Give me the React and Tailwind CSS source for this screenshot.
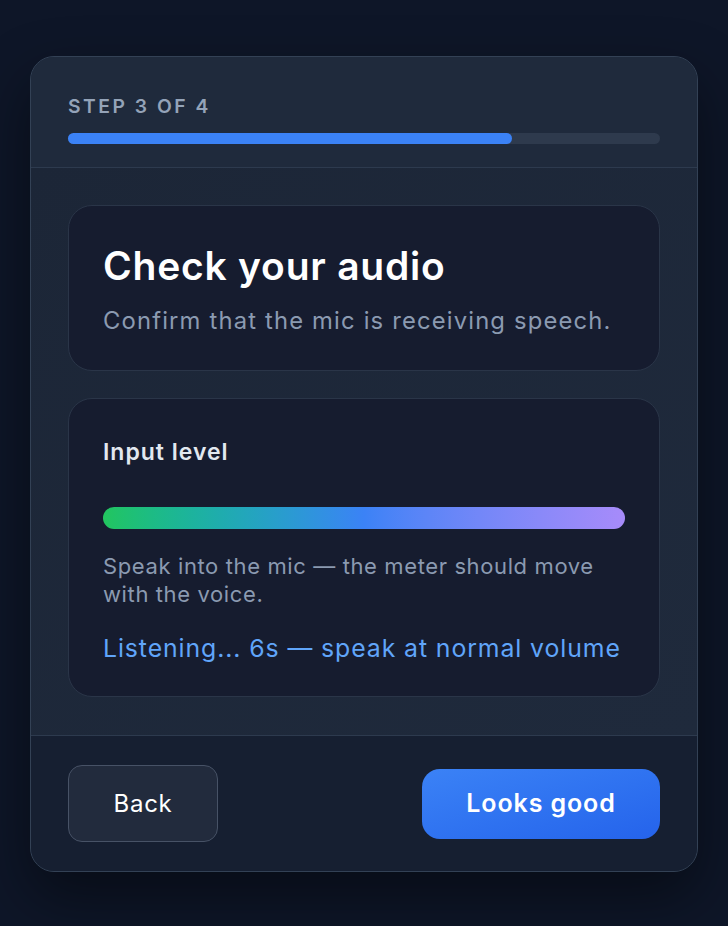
import React from "react";

export default function App() {
  return (
    <div
      className="min-h-[926px] w-full bg-[#0e1628] px-[30px] pt-[56px] pb-[53px]"
      style={{ fontFamily: "Inter, 'Noto Sans', sans-serif" }}
    >
      <div className="overflow-hidden rounded-[24px] border border-[#334155] bg-[#1e293b] shadow-[0_25px_60px_rgba(0,0,0,0.45)]">
        {/* Header */}
        <div className="border-b border-[#2d3a4e] bg-[#1f2a3c] px-[37px] pt-[37px] pb-[23px]">
          <div className="text-[19.3px] leading-[24px] font-semibold tracking-[0.13em] text-[#94a3b8]">
            STEP 3 OF 4
          </div>
          <div className="mt-[15px] h-[11px] w-full rounded-full bg-[#2e3a4d]">
            <div className="h-full w-[75%] rounded-full bg-[#3b82f6]" />
          </div>
        </div>

        {/* Body */}
        <div className="flex flex-col gap-[27px] bg-gradient-to-br from-[#1c2637] to-[#1f2a3c] px-[37px] pt-[37px] pb-[38px]">
          <div className="rounded-[24px] border border-[#2a3548] bg-[#161c2f] px-[34px] pt-[36px] pb-[33px]">
            <h1 className="text-[39px] leading-[48px] font-semibold tracking-[0.02em] text-white">
              Check your audio
            </h1>
            <p className="mt-[15px] text-[23.8px] leading-[32px] tracking-[0.049em] text-[#8b9ab1]">
              Confirm that the mic is receiving speech.
            </p>
          </div>

          <div className="rounded-[24px] border border-[#2a3548] bg-[#161c2f] px-[34px] pt-[39px] pb-[32px]">
            <div className="text-[23px] leading-[28px] font-semibold tracking-[0.043em] text-[#e2e8f0]">
              Input level
            </div>
            <div className="mt-[41px] h-[22px] w-full rounded-full bg-gradient-to-r from-[#22c55e] via-[#3b82f6] to-[#a78bfa]" />
            <p className="mt-[23px] text-[22px] leading-[28px] tracking-[0.028em] text-[#8b9ab1]">
              Speak into the mic — the meter should move with the voice.
            </p>
            <p className="mt-[24px] whitespace-nowrap text-[24.8px] leading-[32px] tracking-[0.037em] text-[#60a5fa]">
              Listening... 6s — speak at normal volume
            </p>
          </div>
        </div>

        {/* Footer */}
        <div className="flex h-[136px] items-center justify-between border-t border-[#2d3a4e] bg-[#161f31] px-[37px]">
          <button className="h-[77px] w-[150px] rounded-[14px] border border-[#475266] bg-[#222b3d] text-[24px] tracking-[0.03em] text-white">
            Back
          </button>
          <button className="h-[70px] w-[238px] rounded-[18px] bg-gradient-to-br from-[#3b82f6] to-[#2563eb] text-[25px] font-semibold tracking-[0.035em] text-white">
            Looks good
          </button>
        </div>
      </div>
    </div>
  );
}
